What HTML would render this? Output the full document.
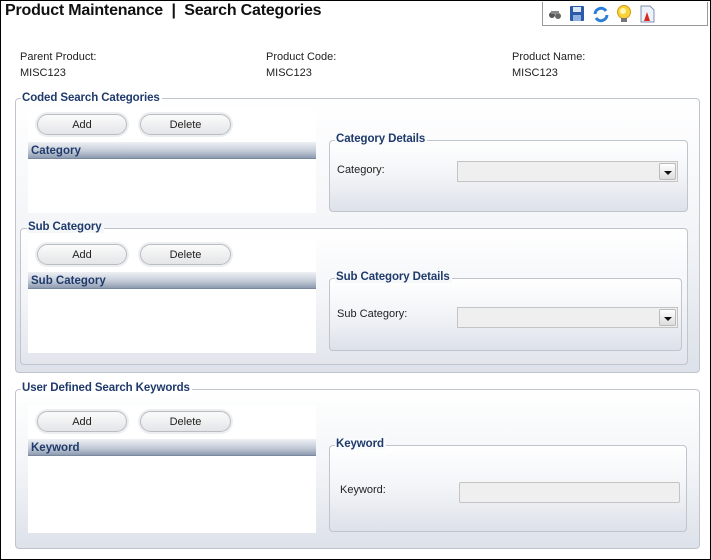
<!DOCTYPE html>
<html><head><style>
*{margin:0;padding:0;box-sizing:border-box}
body{width:711px;height:560px;background:#fff;position:relative;overflow:hidden;font-family:"Liberation Sans",sans-serif;font-size:11px;color:#222}
.a{position:absolute}
.frame{left:0;top:0;width:711px;height:560px;border:1px solid #000}
.title{left:5px;top:2px;font-size:16px;font-weight:bold;color:#111;letter-spacing:-0.2px}
.tb{left:542px;top:2px;width:166px;height:24px;border:1px solid #999;border-top:none}
.fs{border:1px solid #c0c4cc;border-radius:4px;background:linear-gradient(#fff,#f2f4f7 50%,#dde1e9)}
.lg{font-weight:bold;color:#1f3a6b;font-size:11.5px;background:#fff;padding:0 2px 0 1px;letter-spacing:-0.1px}
.panel{background:#fff}
.btn{height:21px;border-radius:11px;border:1px solid #b9bcc1;background:linear-gradient(#fbfbfb,#e4e5e7);box-shadow:0 0 0 2px #eceef0;text-align:center;line-height:20px;font-size:11px;color:#222}
.hdr{height:17px;background:linear-gradient(#eef0f4,#c5ccd8 55%,#8d9bb1);color:#1f3a6b;font-weight:bold;font-size:11.5px;padding-left:3px;line-height:18px;border-bottom:1px solid #7a889e}
.sel{height:21px;border:1px solid #c4c4c4;background:#efefef}
.dd{position:absolute;right:1px;top:1px;width:17px;height:17px;border:1px solid #bbb;border-radius:2px;background:linear-gradient(#fff,#ddd)}
.dd:after{content:"";position:absolute;left:4px;top:7px;border-left:4px solid transparent;border-right:4px solid transparent;border-top:4px solid #111}
</style></head><body>
<div class="a frame"></div>
<div class="a title">Product Maintenance &nbsp;|&nbsp; Search Categories</div>
<div class="a tb">
<svg width="166" height="24" style="position:absolute;left:0;top:0">
<g transform="translate(5,6)"><circle cx="4" cy="7" r="3" fill="#555"/><circle cx="10" cy="8" r="3" fill="#666"/><rect x="3" y="3" width="8" height="3" fill="#888"/></g>
<g transform="translate(27,4)"><rect x="0" y="0" width="14" height="15" fill="#2a5aa8" rx="1"/><rect x="3" y="1" width="8" height="5" fill="#dde6f5"/><rect x="3" y="9" width="8" height="6" fill="#8fb0e0"/></g>
<g transform="translate(50,4)" fill="none" stroke="#2b7fd8" stroke-width="3"><path d="M2 8 A6 6 0 0 1 13 5"/><path d="M14 9 A6 6 0 0 1 3 12"/></g>
<g transform="translate(73,3)"><circle cx="8" cy="7" r="6.5" fill="#f7d23a" stroke="#d49b12"/><circle cx="7" cy="6" r="3" fill="#fff6b0"/><rect x="5" y="13" width="6" height="4" fill="#777"/></g>
<g transform="translate(98,4)"><path d="M0 0h9l4 4v12H0z" fill="#eef2fb" stroke="#8090b0"/><path d="M3 15l3-9 3 9z" fill="#d62a1a"/></g>
</svg></div>

<div class="a" style="left:20px;top:51px">Parent Product:</div><div class="a" style="left:20px;top:67px">MISC123</div>
<div class="a" style="left:266px;top:51px">Product Code:</div><div class="a" style="left:266px;top:67px">MISC123</div>
<div class="a" style="left:512px;top:51px">Product Name:</div><div class="a" style="left:512px;top:67px">MISC123</div>

<div class="a fs" style="left:15px;top:98px;width:685px;height:275px"></div>
<div class="a lg" style="left:21px;top:92px">Coded Search Categories</div>
<div class="a panel" style="left:28px;top:109px;width:288px;height:104px"></div>
<div class="a btn" style="left:37px;top:114px;width:90px">Add</div>
<div class="a btn" style="left:140px;top:114px;width:91px">Delete</div>
<div class="a hdr" style="left:28px;top:142px;width:288px">Category</div>
<div class="a fs" style="left:329px;top:140px;width:359px;height:72px"></div>
<div class="a lg" style="left:335px;top:133px;background:#fafbfc">Category Details</div>
<div class="a" style="left:337px;top:164px">Category:</div>
<div class="a sel" style="left:457px;top:161px;width:221px"><div class="dd"></div></div>

<div class="a fs" style="left:20px;top:228px;width:668px;height:137px;background:linear-gradient(#fff,#f3f5f8 50%,#e2e5ec)"></div>
<div class="a lg" style="left:27px;top:221px;background:#f5f6f8">Sub Category</div>
<div class="a panel" style="left:28px;top:239px;width:288px;height:114px"></div>
<div class="a btn" style="left:37px;top:244px;width:90px">Add</div>
<div class="a btn" style="left:140px;top:244px;width:91px">Delete</div>
<div class="a hdr" style="left:28px;top:272px;width:288px">Sub Category</div>
<div class="a fs" style="left:329px;top:278px;width:353px;height:73px"></div>
<div class="a lg" style="left:335px;top:271px;background:#f7f8fa">Sub Category Details</div>
<div class="a" style="left:337px;top:308px">Sub Category:</div>
<div class="a sel" style="left:457px;top:307px;width:221px"><div class="dd"></div></div>

<div class="a fs" style="left:15px;top:389px;width:685px;height:160px"></div>
<div class="a lg" style="left:21px;top:382px">User Defined Search Keywords</div>
<div class="a panel" style="left:28px;top:406px;width:288px;height:127px"></div>
<div class="a btn" style="left:37px;top:411px;width:90px">Add</div>
<div class="a btn" style="left:140px;top:411px;width:91px">Delete</div>
<div class="a hdr" style="left:28px;top:439px;width:288px">Keyword</div>
<div class="a fs" style="left:329px;top:445px;width:358px;height:87px"></div>
<div class="a lg" style="left:335px;top:438px;background:#fafbfc">Keyword</div>
<div class="a" style="left:340px;top:484px">Keyword:</div>
<div class="a sel" style="left:459px;top:482px;width:221px;border-radius:2px"></div>
</body></html>
